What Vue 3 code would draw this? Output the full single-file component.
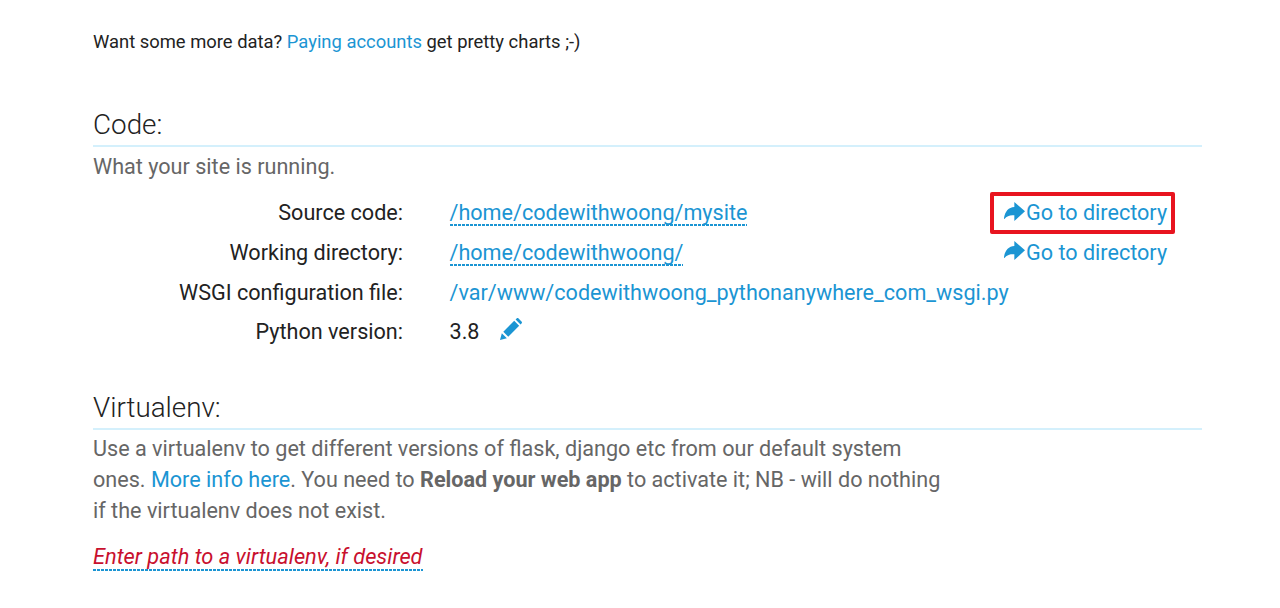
<template>
  <main class="page">
    <p class="intro">Want some more data? <a class="link">Paying accounts</a> get pretty charts ;-)</p>

    <section class="code">
      <h2 class="heading">Code:</h2>
      <p class="lead">What your site is running.</p>
      <div class="rows">
        <div class="row">
          <span class="label">Source code:</span>
          <span class="value"><a class="link dashed">/home/codewithwoong/mysite</a></span>
          <span class="action boxed">
            <a class="link go"><svg class="arrow" viewBox="0 0 63 57"><path d="M31 0 L63 28 L31 57 V40 C20 38 8 42 2 50 C0 52 0 50 0 48 C3 28 14 16 31 15 Z" /></svg>Go to directory</a>
          </span>
        </div>
        <div class="row">
          <span class="label">Working directory:</span>
          <span class="value"><a class="link dashed">/home/codewithwoong/</a></span>
          <span class="action">
            <a class="link go"><svg class="arrow" viewBox="0 0 63 57"><path d="M31 0 L63 28 L31 57 V40 C20 38 8 42 2 50 C0 52 0 50 0 48 C3 28 14 16 31 15 Z" /></svg>Go to directory</a>
          </span>
        </div>
        <div class="row">
          <span class="label">WSGI configuration file:</span>
          <span class="value"><a class="link">/var/www/codewithwoong_pythonanywhere_com_wsgi.py</a></span>
        </div>
        <div class="row">
          <span class="label">Python version:</span>
          <span class="value version">3.8
            <svg class="pencil" viewBox="0 0 24 24"><path d="M0 24 L2 16.5 L7.5 22 Z M3.6 15 L15.5 3.1 L20.9 8.5 L9 20.4 Z M17 1.6 L18.4 0.3 C18.9 -0.1 19.5 -0.1 20 0.3 L23.7 4 C24.1 4.5 24.1 5.1 23.7 5.6 L22.4 7 Z" /></svg>
          </span>
        </div>
      </div>
    </section>

    <section class="venv">
      <h2 class="heading">Virtualenv:</h2>
      <p class="lead wrap">Use a virtualenv to get different versions of flask, django etc from our default system ones. <a class="link">More info here</a>. You need to <b>Reload your web app</b> to activate it; NB - will do nothing if the virtualenv does not exist.</p>
      <a class="empty">Enter path to a virtualenv, if desired</a>
    </section>
  </main>
</template>

<script setup>
</script>

<style>
html, body { background: #fff; }
</style>

<style scoped>
.page {
  box-sizing: border-box;
  width: 1280px;
  height: 608px;
  overflow: hidden;
  padding: 29px 78px 0 93px;
  font-family: Roboto, sans-serif;
  font-size: 21.6px;
  color: #666;
}
.intro {
  margin: 0;
  font-size: 18.4px;
  line-height: 25px;
  color: #222;
}
.link { color: #1b95d3; }
.code { margin-top: 52px; }
.heading {
  margin: 0;
  height: 39px;
  font-size: 27.8px;
  line-height: 38px;
  font-weight: 300;
  color: #222;
  border-bottom: 2px solid #d4f0fc;
}
.lead {
  margin: 4px 0 0;
  line-height: 31px;
}
.rows { margin-top: 10px; }
.row {
  display: flex;
  align-items: center;
  height: 40px;
  color: #222;
}
.row:last-child { height: 38px; }
.label {
  width: 310px;
  text-align: right;
  flex: none;
}
.value {
  margin-left: 46.5px;
  flex: 1;
}
.dashed,
.empty {
  background-image: repeating-linear-gradient(to right, #1b95d3 0 3px, transparent 3px 4px);
  background-position: left bottom;
  background-size: 100% 2px;
  background-repeat: no-repeat;
}
.dashed { padding-bottom: 1px; }
.action {
  box-sizing: border-box;
  width: 185px;
  height: 42px;
  margin-right: 27px;
  padding-left: 14px;
  display: flex;
  align-items: center;
  flex: none;
}
.boxed {
  margin-top: 1px;
  border: 4px solid #e8141f;
  border-radius: 2px;
  padding-left: 10px;
}
.go { display: flex; align-items: center; }
.arrow {
  width: 21px;
  height: 19px;
  margin-right: 1px;
  fill: #1b95d3;
  margin-top: -3px;
}
.version { display: flex; align-items: center; }
.pencil {
  width: 22px;
  height: 22px;
  margin-left: 21px;
  margin-top: -4px;
  fill: #1b95d3;
}
.venv { margin-top: 39px; }
.venv .lead { margin-top: 3px; }
.wrap { width: 855px; }
.wrap b { font-weight: 700; }
.empty {
  display: inline-block;
  margin-top: 17px;
  font-style: italic;
  font-size: 21.8px;
  color: #c8102e;
  line-height: 28px;
}
</style>
